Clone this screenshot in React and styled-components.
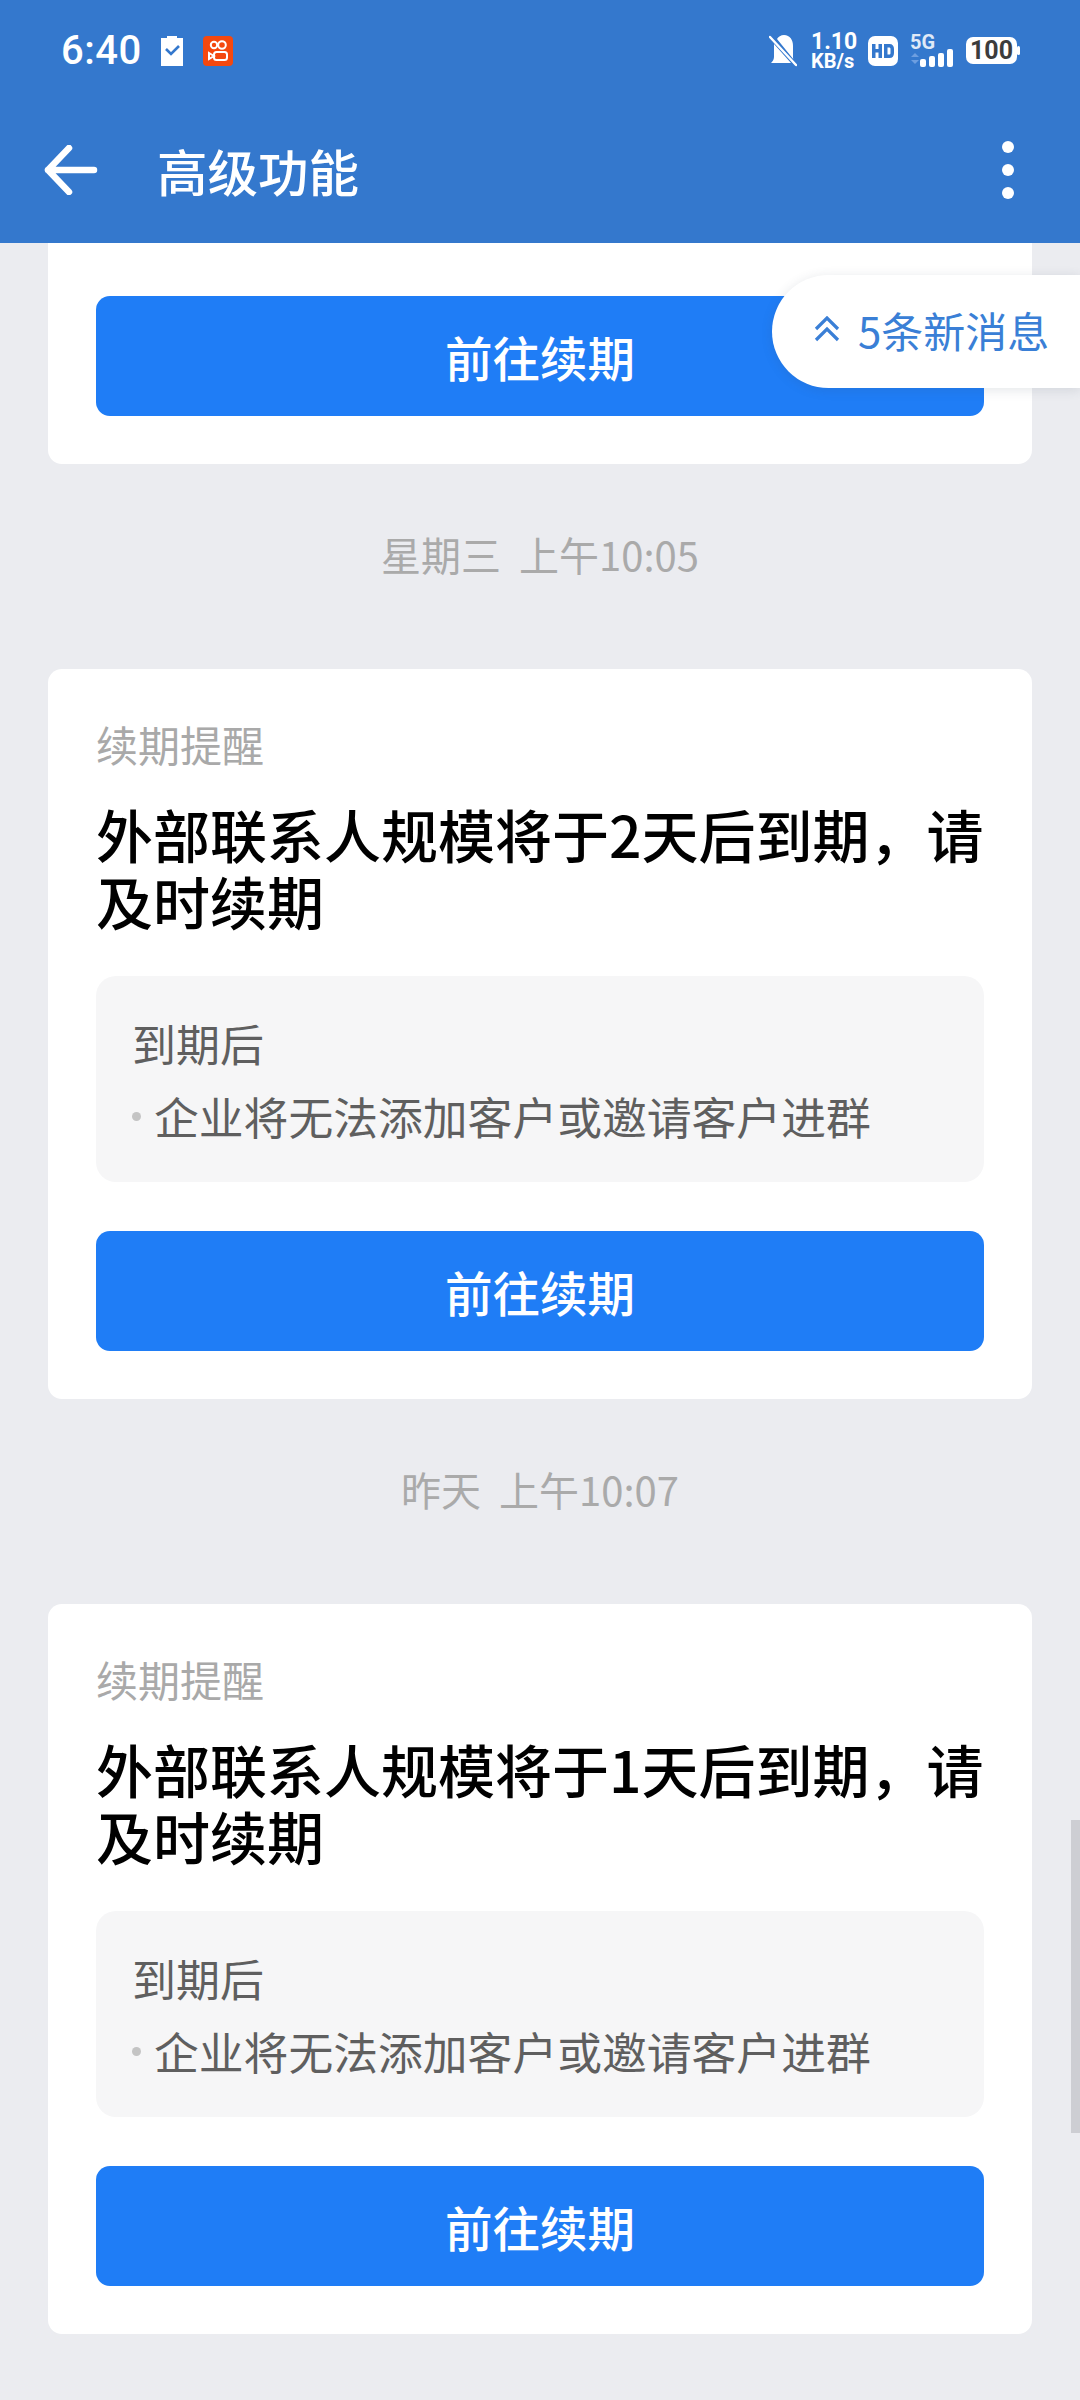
import React from "react";
import styled, { createGlobalStyle } from "styled-components";

const Global = createGlobalStyle`
  html, body { margin: 0; padding: 0; background: #ebecf0; }
  * { box-sizing: border-box; }
  body { font-family: "Noto Sans CJK SC", "Noto Sans", sans-serif; }
`;

const Page = styled.div`
  position: relative;
  width: 1080px;
  height: 2400px;
  overflow: hidden;
  background: #ebecf0;
  display: flex;
  flex-direction: column;
`;

const Header = styled.header`
  height: 243px;
  flex: none;
  background: #3478cd;
  color: #fff;
  display: flex;
  flex-direction: column;
`;

const StatusBar = styled.div`
  height: 100px;
  padding: 33px 60px 0 61px;
  display: flex;
  justify-content: space-between;
  align-items: flex-start;
`;

const StatusGroup = styled.div`
  display: flex;
  align-items: center;
  height: 36px;
`;

const Time = styled.span`
  font-family: Roboto, sans-serif;
  font-size: 40px;
  font-weight: 500;
  line-height: 36px;
  letter-spacing: 0.5px;
  margin-right: 19px;
`;

const Speed = styled.div`
  font-family: Roboto, sans-serif;
  font-weight: 700;
  font-size: 20px;
  line-height: 19px;
  display: flex;
  flex-direction: column;
  align-items: flex-start;
  margin: 0 13px 0 14px;
  width: 44px;
  span:first-child { font-size: 23px; line-height: 20px; }
`;

const Nav = styled.div`
  flex: 1;
  display: flex;
  align-items: center;
  padding: 0 66px 0 44px;
  margin-top: -4px;
`;

const NavTitle = styled.h1`
  margin: 0 0 0 59px;
  flex: 1;
  font-size: 50.5px;
  font-weight: 500;
  line-height: 60px;
`;

const Feed = styled.main`
  display: flex;
  flex-direction: column;
  padding: 0 48px;
`;

const Card = styled.section`
  background: #fff;
  border-radius: ${p => (p.$cut ? "0 0 14px 14px" : "14px")};
  padding: ${p => (p.$cut ? "53px" : "45px")} 48px 48px;
  display: flex;
  flex-direction: column;
`;

const Label = styled.div`
  font-size: 42px;
  line-height: 60px;
  color: #a9a9a9;
  margin-bottom: 26px;
`;

const Title = styled.h2`
  margin: 0 0 42px;
  font-size: 57px;
  font-weight: 500;
  line-height: 67px;
  color: #000;
`;

const Notice = styled.div`
  background: #f6f6f7;
  border-radius: 20px;
  padding: 39px 36px 38px;
  margin-bottom: 49px;
  color: #5f5f5f;
  font-size: 44px;
  line-height: 56px;
  display: flex;
  flex-direction: column;
  gap: 17px;
`;

const Bullet = styled.div`
  display: flex;
  align-items: center;
  font-size: 44.8px;
  &::before {
    content: "";
    width: 9px;
    height: 9px;
    border-radius: 50%;
    background: #c4c4c4;
    margin: 0 13px 0 0;
  }
`;

const ActionButton = styled.button`
  height: 120px;
  width: 100%;
  border: 0;
  border-radius: 14px;
  background: #1f7df6;
  color: #fff;
  font-family: inherit;
  font-size: 47.5px;
  font-weight: 500;
  padding: 0;
`;

const Stamp = styled.div`
  height: 205px;
  display: flex;
  align-items: center;
  justify-content: center;
  padding-bottom: 25px;
  color: #aaa;
  font-size: 40px;
  white-space: pre;
`;

const NewPill = styled.div`
  position: absolute;
  top: 275px;
  right: 0;
  width: 308px;
  height: 113px;
  border-radius: 57px 0 0 57px;
  background: #fff;
  box-shadow: 0 2px 12px rgba(60, 70, 90, 0.14);
  color: #3a7fd6;
  font-size: 42px;
  display: flex;
  align-items: center;
  padding: 0 0 5px 42px;
  gap: 18px;
`;

const ScrollThumb = styled.div`
  position: absolute;
  top: 1820px;
  right: 0;
  width: 9px;
  height: 313px;
  background: #cdced3;
`;

const HdGap = styled.div`
  width: 12px;
`;

const Clipboard = () => (
  <svg width="22" height="30" viewBox="0 0 22 30" style={{ marginRight: 20 }}>
    <path fill="#fff" d="M0 2h6V0h10v2h6v28H0z" />
    <path fill="none" stroke="#3478cd" strokeWidth="2.6" d="M5 13l5 5 8-8" />
  </svg>
);

const Kuaishou = () => (
  <svg width="30" height="30" viewBox="0 0 30 30">
    <rect width="30" height="30" rx="4" fill="#f4480f" />
    <g fill="none" stroke="#fff" strokeWidth="2">
      <circle cx="11" cy="9" r="3.2" />
      <circle cx="19" cy="9" r="3.8" />
      <rect x="11" y="16" width="13" height="8" rx="2.5" />
      <path d="M11 20L6 17v6z" />
    </g>
  </svg>
);

const BellOff = () => (
  <svg width="28" height="32" viewBox="0 0 28 32">
    <path fill="#fff" d="M5 9l17 19H2c1-1 3-3 3-6zM8 4c1-2 4-4 7-4 6 0 9 5 9 11v11c0 1 0 2 1 3z" />
    <path stroke="#fff" strokeWidth="2.4" strokeLinecap="round" d="M1 2l26 28" />
  </svg>
);

const HdIcon = () => (
  <svg width="30" height="30" viewBox="0 0 30 30">
    <rect width="30" height="30" rx="7" fill="#fff" />
    <path fill="#3478cd" d="M4 8h3.500v5h3V8H14v14h-3.500v-5.500h-3V22H4zM16 8h5.500c3 0 4.500 2 4.500 5v4c0 3-1.500 5-4.500 5H16zm3.500 3.500v7h1.500c1 0 1.500-.5 1.500-1.500v-4c0-1-.5-1.500-1.500-1.500z" />
  </svg>
);

const Signal = () => (
  <svg width="46" height="32" viewBox="0 0 46 32" overflow="visible" style={{ marginRight: 10 }}>
    <text x="0" y="14" fontFamily="Roboto, sans-serif" fontWeight="700" fontSize="20" fill="#dfe9f7">5G</text>
    <path fill="#6d9ee0" d="M1 22l4-4 4 4zM1 25h8l-4 4z" />
    <rect x="10" y="24" width="6" height="8" rx="2" fill="#fff" />
    <rect x="19" y="21" width="6" height="11" rx="2" fill="#fff" />
    <rect x="28" y="18" width="6" height="14" rx="2" fill="#fff" />
    <rect x="37" y="14" width="6" height="18" rx="2" fill="#fff" />
  </svg>
);

const Battery = () => (
  <svg width="54" height="28" viewBox="0 0 54 28">
    <rect width="51" height="27" rx="7" fill="#fff" />
    <rect x="51" y="9" width="3" height="9" rx="1.500" fill="#fff" />
    <text x="25.500" y="22" textAnchor="middle" fontFamily="Roboto, sans-serif" fontWeight="700" fontSize="25" fill="#3c3c3c">100</text>
  </svg>
);

const BackArrow = () => (
  <svg width="54" height="50" viewBox="0 0 54 50" fill="none" stroke="#fff" strokeWidth="6.500" strokeLinecap="round" strokeLinejoin="round">
    <path d="M50 25H4M25 3L4 25l21 22" />
  </svg>
);

const MoreDots = () => (
  <svg width="12" height="58" viewBox="0 0 12 58" fill="#fff">
    <circle cx="6" cy="6" r="6" />
    <circle cx="6" cy="29" r="6" />
    <circle cx="6" cy="52" r="6" />
  </svg>
);

const DoubleUp = () => (
  <svg width="26" height="26" viewBox="0 0 26 26" fill="none" stroke="#3a7fd6" strokeWidth="3.200">
    <path d="M2 13L13 2l11 11M2 24l11-11 11 11" />
  </svg>
);

const RenewCard = ({ days }) => (
  <Card>
    <Label>续期提醒</Label>
    <Title>{`外部联系人规模将于${days}天后到期，请及时续期`}</Title>
    <Notice>
      <div>到期后</div>
      <Bullet>企业将无法添加客户或邀请客户进群</Bullet>
    </Notice>
    <ActionButton>前往续期</ActionButton>
  </Card>
);

export default function App() {
  return (
    <Page>
      <Global />
      <Header>
        <StatusBar>
          <StatusGroup>
            <Time>6:40</Time>
            <Clipboard />
            <Kuaishou />
          </StatusGroup>
          <StatusGroup>
            <BellOff />
            <Speed>
              <span>1.10</span>
              <span>KB/s</span>
            </Speed>
            <HdIcon />
            <HdGap />
            <Signal />
            <Battery />
          </StatusGroup>
        </StatusBar>
        <Nav>
          <BackArrow />
          <NavTitle>高级功能</NavTitle>
          <MoreDots />
        </Nav>
      </Header>
      <Feed>
        <Card $cut>
          <ActionButton>前往续期</ActionButton>
        </Card>
        <Stamp>{"星期三  上午10:05"}</Stamp>
        <RenewCard days={2} />
        <Stamp>{"昨天  上午10:07"}</Stamp>
        <RenewCard days={1} />
      </Feed>
      <NewPill>
        <DoubleUp />
        <span>5条新消息</span>
      </NewPill>
      <ScrollThumb />
    </Page>
  );
}
